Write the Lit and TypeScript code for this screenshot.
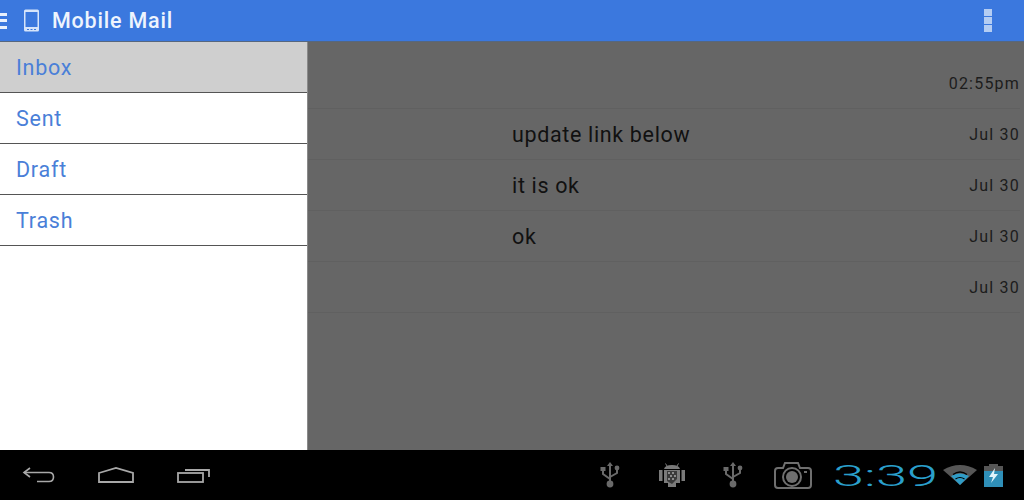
import { LitElement, html, css, svg } from "lit";
import { customElement } from "lit/decorators.js";

const rows = [
  { s: "", d: "02:55pm" },
  { s: "update link below", d: "Jul 30" },
  { s: "it is ok", d: "Jul 30" },
  { s: "ok", d: "Jul 30" },
  { s: "", d: "Jul 30" },
];
const folders = ["Inbox", "Sent", "Draft", "Trash"];

const usb = svg`<g fill="none" stroke="#6a6a6a" stroke-width="2"><path d="M10 3V23"/><path d="M3 8V12L10 17M17 7V11L10 15"/></g><path d="M10 0L13 4H7Z M0.5 5H5.5V9H0.5Z" fill="#6a6a6a"/><circle cx="17" cy="6" r="2.4" fill="#6a6a6a"/><circle cx="10" cy="22" r="3.4" fill="#6a6a6a"/>`;

@customElement("app-root")
export class AppRoot extends LitElement {
  static styles = css`
    :host { display: block; width: 1024px; height: 500px; overflow: hidden; font-family: "Roboto", "Noto Sans", sans-serif; }
    .app { display: flex; flex-direction: column; height: 500px; }
    .bar { height: 41px; flex: none; background: #3b78de; border-bottom: 1px solid #56677f; display: flex; align-items: center; color: #eef4fd; box-sizing: content-box; }
    .menu { width: 7px; height: 16px; margin-right: 16px; display: flex; flex-direction: column; justify-content: space-between; }
    .menu i { display: block; height: 3px; background: #e8f0fc; }
    .phone { width: 17px; height: 23px; margin-right: 12px; flex: none; }
    .title { font-size: 21.5px; font-weight: 500; letter-spacing: 0.8px; flex: 1; }
    .dots { display: flex; flex-direction: column; gap: 1px; margin-right: 32px; }
    .dots i { display: block; width: 8px; height: 7px; background: #b4cdf3; }
    .main { flex: 1; display: flex; min-height: 0; }
    .drawer { width: 307px; flex: none; background: #fff; border-right: 1px solid #8a8a8a; }
    .folder { height: 50px; box-sizing: content-box; border-bottom: 1px solid #555; display: flex; align-items: center; padding-left: 16px; color: #4a7fd8; font-size: 21.5px; letter-spacing: 0.75px; }
    .folder.on { background: #cfcfcf; }
    .list { flex: 1; background: #666; padding: 16px 4px 0 0; }
    .row { height: 49px; padding-top: 1px; border-bottom: 1px solid #606060; display: flex; align-items: center; padding-left: 204px; color: #111; }
    .subj { flex: 1; font-size: 21.5px; letter-spacing: 0.65px; }
    .date { font-size: 16px; letter-spacing: 1.2px; color: #1c1c1c; }
    .sys { height: 50px; flex: none; background: #000; display: flex; align-items: center; }
    .nav { display: flex; align-items: center; gap: 0; }
    .nav svg { display: block; }
    .n1 { margin-left: 22px; }
    .n2 { margin-left: 43px; }
    .n3 { margin-left: 43px; }
    .tray { margin-left: auto; display: flex; align-items: center; }
    .i2 { margin-left: 39px; }
    .i3 { margin-left: 38px; }
    .i4 { margin-left: 31px; }
    .clock { font-family: "Roboto", sans-serif; font-weight: 300; font-size: 30px; color: #2a9fcb; display: inline-block; width: 110px; transform: scaleX(1.87); transform-origin: left center; margin-left: 21px; }
    .batt { margin: 0 21px 0 7px; }
  `;

  render() {
    return html`<div class="app">
      <div class="bar">
        <div class="menu"><i></i><i></i><i></i></div>
        <svg class="phone" viewBox="0 0 17 23"><path d="M2.5 0.5H14.5Q16 0.5 16 2V21Q16 22.5 14.5 22.5H2.5Q1 22.5 1 21V2Q1 0.5 2.5 0.5Z" fill="#d6e4fa"/><rect x="2.5" y="3" width="12" height="15" fill="#3b78de"/><path d="M4 20H6V21H4ZM7.5 20H9.5V21H7.5ZM11 20H13V21H11Z" fill="#3b78de"/></svg>
        <div class="title">Mobile Mail</div>
        <div class="dots"><i></i><i></i><i></i></div>
      </div>
      <div class="main">
        <div class="drawer">
          ${folders.map((f, i) => html`<div class="folder ${i === 0 ? "on" : ""}">${f}</div>`)}
        </div>
        <div class="list">
          ${rows.map((r) => html`<div class="row"><span class="subj">${r.s}</span><span class="date">${r.d}</span></div>`)}
        </div>
      </div>
      <div class="sys">
        <div class="nav">
          <svg class="n1" width="33" height="18" viewBox="0 0 33 18" fill="none" stroke="#a8a8a8" stroke-width="1.6"><path d="M8 2L2 6.5L8 11"/><path d="M2 6.5H27Q31.5 6.5 31.5 11Q31.5 15.5 27 15.5H15"/></svg>
          <svg class="n2" width="36" height="16" viewBox="0 0 36 16" fill="none" stroke="#a8a8a8" stroke-width="1.8"><path d="M1 6L18 1L35 6V15H1Z" stroke-linejoin="miter"/></svg>
          <svg class="n3" width="33" height="16" viewBox="0 0 33 16" fill="none" stroke="#a8a8a8" stroke-width="1.8"><rect x="1" y="6" width="25" height="9"/><path d="M8 3H32V10"/></svg>
        </div>
        <div class="tray">
          <svg width="20" height="26" viewBox="0 0 20 26">${usb}</svg>
          <svg class="i2" width="26" height="24" viewBox="0 0 26 24"><path d="M5 6Q6 2 13 2Q20 2 21 6Z" fill="#7a7a7a"/><path d="M8 3L6.5 0.5M18 3L19.5 0.5" stroke="#7a7a7a"/><rect x="0" y="7" width="3.5" height="11" fill="#7a7a7a"/><rect x="22.5" y="7" width="3.5" height="11" fill="#7a7a7a"/><path d="M5 7H21V20H17V24H9V20H5Z" fill="#7a7a7a"/><path d="M8 8H18V16L13 21L8 18Z" fill="#3a3a3a"/><path d="M9 9H11V11H9ZM13 9H15V11H13ZM11 12H13V14H11ZM15 12H17V14H15ZM9 15H11V17H9ZM13 15H15V17H13Z" fill="#8c8c8c"/></svg>
          <svg class="i3" width="20" height="26" viewBox="0 0 20 26">${usb}</svg>
          <svg class="i4" width="38" height="28" viewBox="0 0 38 28" fill="none" stroke="#6f6f6f" stroke-width="2"><path d="M4 7H9L11 2H24L26 7H34Q37 7 37 10V24Q37 27 34 27H4Q1 27 1 24V10Q1 7 4 7Z"/><circle cx="18" cy="16" r="9"/><circle cx="18" cy="16" r="6" fill="#6f6f6f" stroke="none"/><rect x="30" y="10" width="3" height="2" fill="#6f6f6f" stroke="none"/></svg>
          <span class="clock">3:39</span>
          <svg width="34" height="20" viewBox="0 0 34 20"><path d="M0 5Q17 -5 34 5L17 20Z" fill="#565656"/><path d="M8 11Q17 6 26 11L17 20Z" fill="#2f9cc6"/><path d="M10 9.5Q17 4.5 24 9.5" stroke="#000" stroke-width="1.4" fill="none"/><path d="M12.5 14Q17 11 21.5 14" stroke="#000" stroke-width="1.2" fill="none"/></svg>
          <svg class="batt" width="19" height="23" viewBox="0 0 19 23"><rect x="5" y="0" width="9" height="3" fill="#565656"/><rect x="0" y="2" width="19" height="21" fill="#565656"/><rect x="0" y="7" width="19" height="16" fill="#2f8fb8"/><path d="M11 4L5 13H9L7 19L14 10H10Z" fill="#dff3fb"/></svg>
        </div>
      </div>
    </div>`;
  }
}
